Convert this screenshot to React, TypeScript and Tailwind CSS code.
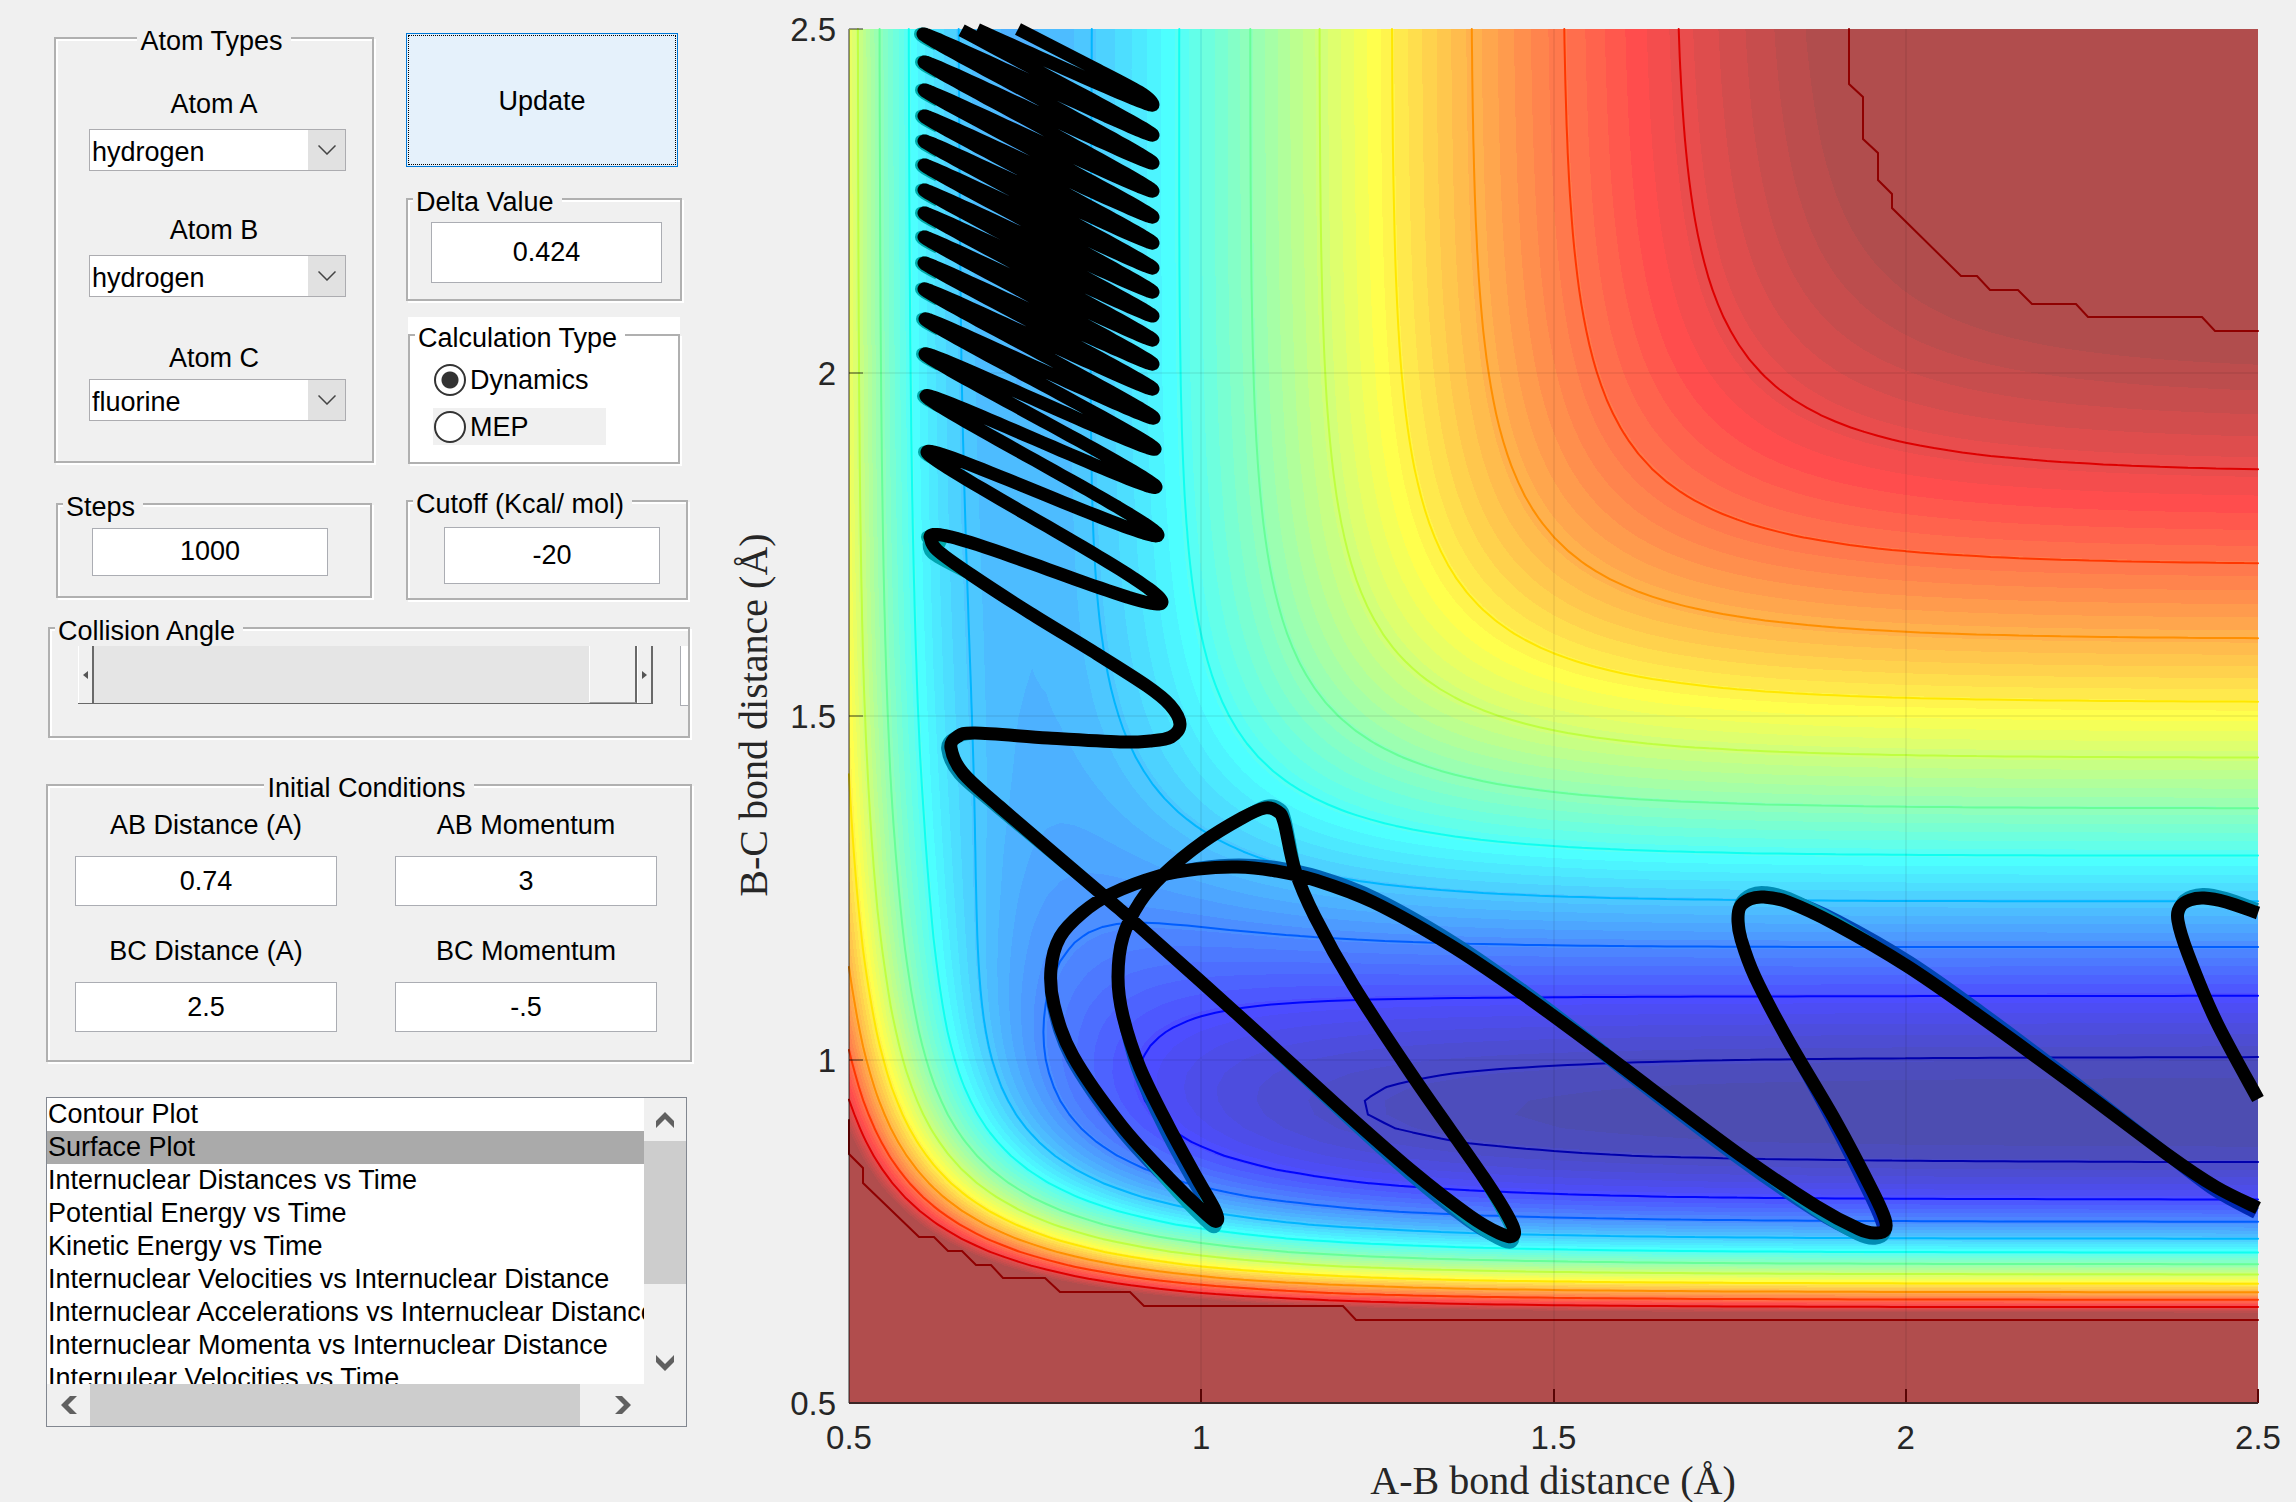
import { useId, useMemo, useState } from "react";
import type { ReactNode } from "react";

/* ---------- potential energy surface (collinear LEPS, H + H + F) ---------- */

type Pair = { d: number; beta: number; re: number; sato: number };
type Pt = [number, number];

const HH: Pair = { d: 109.5, beta: 1.959, re: 0.741, sato: 0.19 };
const HF: Pair = { d: 141.2, beta: 2.245, re: 0.92, sato: 0.167 };

function terms({ d, beta, re, sato }: Pair, r: number) {
  const e1 = Math.exp(-beta * (r - re));
  const e2 = e1 * e1;
  const c = d / (4 * (1 + sato));
  return {
    q: c * ((3 + sato) * e2 - (2 + 6 * sato) * e1),
    j: c * ((1 + 3 * sato) * e2 - (6 + 2 * sato) * e1),
  };
}

function potential(rab: number, rbc: number) {
  const a = terms(HH, rab);
  const b = terms(HF, rbc);
  const c = terms(HF, rab + rbc);
  const s = (a.j - b.j) ** 2 + (b.j - c.j) ** 2 + (c.j - a.j) ** 2;
  return a.q + b.q + c.q - Math.sqrt(s / 2);
}

const LEFT = 849;
const RIGHT = 2258;
const TOP = 29;
const BOTTOM = 1403;
const N = 100;
const V_MIN = -141.2;
const V_MAX = -20;
const COLOURS = 64;

const gx = (i: number) => LEFT + ((RIGHT - LEFT) * i) / N;
const gy = (j: number) => BOTTOM - ((BOTTOM - TOP) * j) / N;

const GRID: number[][] = Array.from({ length: N + 1 }, (_, j) =>
  Array.from({ length: N + 1 }, (_, i) => potential(0.5 + (2 * i) / N, 0.5 + (2 * j) / N)),
);

const unit = (v: number) => Math.min(1, Math.max(0, v));

function jet(t: number, alpha: number) {
  const mix = (v: number) => Math.round(255 * (unit(v) * alpha + (1 - alpha)));
  return `rgb(${mix(1.5 - Math.abs(4 * t - 3))},${mix(1.5 - Math.abs(4 * t - 2))},${mix(1.5 - Math.abs(4 * t - 1))})`;
}

const f = (n: number) => n.toFixed(1);

function corners(i: number, j: number) {
  return [
    { x: gx(i), y: gy(j), v: GRID[j][i] },
    { x: gx(i + 1), y: gy(j), v: GRID[j][i + 1] },
    { x: gx(i + 1), y: gy(j + 1), v: GRID[j + 1][i + 1] },
    { x: gx(i), y: gy(j + 1), v: GRID[j + 1][i] },
  ];
}

/* Area in which the potential is at least `level`. */
function regionPath(level: number) {
  let d = "";
  for (let j = 0; j < N; j++) {
    let run = -1;
    for (let i = 0; i <= N; i++) {
      const inside =
        i < N &&
        GRID[j][i] >= level &&
        GRID[j][i + 1] >= level &&
        GRID[j + 1][i + 1] >= level &&
        GRID[j + 1][i] >= level;
      if (inside) {
        if (run < 0) run = i;
        continue;
      }
      if (run >= 0) {
        d += `M${f(gx(run))} ${f(gy(j))}H${f(gx(i))}V${f(gy(j + 1))}H${f(gx(run))}Z`;
        run = -1;
      }
      if (i === N) continue;
      const c = corners(i, j);
      const pts: string[] = [];
      for (let k = 0; k < 4; k++) {
        const p = c[k];
        const q = c[(k + 1) % 4];
        if (p.v >= level) pts.push(`${f(p.x)} ${f(p.y)}`);
        if (p.v >= level !== q.v >= level) {
          const t = (level - p.v) / (q.v - p.v);
          pts.push(`${f(p.x + (q.x - p.x) * t)} ${f(p.y + (q.y - p.y) * t)}`);
        }
      }
      if (pts.length > 2) d += `M${pts.join("L")}Z`;
    }
  }
  return d;
}

function linePath(level: number) {
  let d = "";
  for (let j = 0; j < N; j++) {
    for (let i = 0; i < N; i++) {
      const c = corners(i, j);
      const pts: string[] = [];
      for (let k = 0; k < 4; k++) {
        const p = c[k];
        const q = c[(k + 1) % 4];
        if (p.v >= level !== q.v >= level) {
          const t = (level - p.v) / (q.v - p.v);
          pts.push(`${f(p.x + (q.x - p.x) * t)} ${f(p.y + (q.y - p.y) * t)}`);
        }
      }
      if (pts.length >= 2) d += `M${pts[0]}L${pts[1]}`;
    }
  }
  return d;
}

/* ---------- trajectory ---------- */

const RIGHT_TURNS: Pt[] = [
  [1153, 105], [1153, 135], [1153, 163], [1153, 191], [1153, 217], [1153, 243],
  [1153, 268], [1153, 292], [1153, 316], [1153, 340], [1153, 364], [1153, 389],
  [1154, 418], [1155, 449], [1156, 487], [1158, 535], [1162, 602],
];
const LEFT_TURNS: Pt[] = [
  [922, 7], [923, 34], [924, 62], [924, 90], [924, 116], [924, 141],
  [924, 165], [924, 190], [924, 213], [924, 237], [924, 263], [924, 289],
  [925, 319], [925, 354], [926, 396], [927, 452], [930, 537],
];
const SWING = 57;
const ANHARMONIC = 0.05;
const STEPS = 40;

function vibration(): Pt[] {
  const turns = RIGHT_TURNS.flatMap((r, k) => [
    { x: r[0], side: 1, drift: r[1] - SWING },
    { x: LEFT_TURNS[k][0], side: -1, drift: LEFT_TURNS[k][1] + SWING },
  ]);
  const out: Pt[] = [];
  for (let k = 0; k < turns.length - 1; k++) {
    const a = turns[k];
    const b = turns[k + 1];
    const before = turns[k - 1]?.drift ?? a.drift - 15;
    const after = turns[k + 2]?.drift ?? 667;
    const ma = (b.drift - before) / 2;
    const mb = (after - a.drift) / 2;
    for (let n = 0; n < STEPS; n++) {
      const s = n / STEPS;
      const c = (1 - Math.cos(Math.PI * s)) / 2 + b.side * ANHARMONIC * Math.sin(Math.PI * s) ** 2;
      const s2 = s * s;
      const s3 = s2 * s;
      const drift =
        (2 * s3 - 3 * s2 + 1) * a.drift +
        (s3 - 2 * s2 + s) * ma +
        (3 * s2 - 2 * s3) * b.drift +
        (s3 - s2) * mb;
      out.push([a.x + (b.x - a.x) * c, drift + SWING * (a.side + (b.side - a.side) * c)]);
    }
  }
  return out;
}

const REACTION: Pt[] = [
  [930, 537], [937, 550], [970, 574], [1030, 613], [1097, 654], [1147, 686], [1170, 705],
  [1180, 724], [1171, 737], [1150, 741], [1120, 742], [1048, 738], [975, 733], [957, 737],
  [951, 748], [963, 773], [1000, 807], [1104, 896], [1133, 921], [1237, 1014], [1339, 1107],
  [1412, 1171], [1470, 1216], [1499, 1233], [1513, 1236], [1511, 1222], [1484, 1178],
  [1412, 1075], [1353, 985], [1315, 917], [1295, 870], [1284, 822], [1277, 811], [1265, 808],
  [1242, 818], [1203, 842], [1164, 874], [1140, 902], [1123, 937], [1118, 977], [1123, 1016],
  [1140, 1068], [1169, 1127], [1198, 1180], [1215, 1210], [1217, 1221], [1207, 1215],
  [1169, 1178], [1121, 1125], [1073, 1056], [1054, 1005], [1051, 969], [1060, 937],
  [1082, 913], [1111, 894], [1159, 876], [1198, 869], [1237, 867], [1276, 871], [1315, 880],
  [1373, 902], [1450, 945], [1523, 994], [1590, 1043], [1621, 1066], [1740, 1155],
  [1816, 1206], [1859, 1229], [1876, 1233], [1885, 1230], [1885, 1219], [1873, 1192],
  [1835, 1120], [1788, 1040], [1755, 977], [1741, 939], [1738, 921], [1740, 907], [1750, 899],
  [1764, 897], [1788, 902], [1835, 924], [1907, 966], [1978, 1015], [2073, 1084],
  [2168, 1155], [2216, 1187], [2258, 1208],
];

const RETURN_LEG: Pt[] = [
  [2258, 1099], [2216, 1021], [2188, 954], [2178, 921], [2180, 907], [2190, 900],
  [2204, 898], [2226, 902], [2258, 913],
];

function spline(p: Pt[]) {
  let d = `M${f(p[0][0])} ${f(p[0][1])}`;
  for (let i = 0; i < p.length - 1; i++) {
    const a = p[i - 1] ?? p[i];
    const b = p[i];
    const c = p[i + 1];
    const e = p[i + 2] ?? c;
    d += `C${f(b[0] + (c[0] - a[0]) / 6)} ${f(b[1] + (c[1] - a[1]) / 6)} ${f(c[0] - (e[0] - b[0]) / 6)} ${f(c[1] - (e[1] - b[1]) / 6)} ${f(c[0])} ${f(c[1])}`;
  }
  return d;
}

function trajectoryPath() {
  let d = "M1018 29L1092 67C1125 84 1153 97 1153 105";
  let pen = true;
  for (const [x, y] of vibration()) {
    if (y < 29) {
      pen = false;
      continue;
    }
    d += `${pen ? "L" : "M"}${f(x)} ${f(y)}`;
    pen = true;
  }
  return d + "L" + spline(REACTION).slice(1);
}

/* Part of the curve that dips below the translucent surface, fading back into it at both ends. */
const submerged = (from: number, to: number, dx: number, dy: number) =>
  spline(
    REACTION.slice(from, to).map(([x, y], i, all): Pt => {
      const w = Math.sin((Math.PI * i) / (all.length - 1));
      return [x + dx * w, y + dy * w];
    }),
  );

const SHADES: { d: string; colour: string }[] = [
  { d: submerged(0, 3, -5, 3), colour: "#00a5b0" },
  { d: submerged(12, 18, -4, 1), colour: "#0087a8" },
  { d: submerged(19, 27, -3, 4), colour: "#0064b4" },
  { d: submerged(21, 27, -1, 6), colour: "#0096b4" },
  { d: submerged(30, 35, 2, -3), colour: "#0096b4" },
  { d: submerged(40, 46, -4, 3), colour: "#0050b4" },
  { d: submerged(45, 52, -2, 3), colour: "#0050b4" },
  { d: submerged(43, 49, -2, 6), colour: "#00a0b4" },
  { d: submerged(55, 65, 3, -4), colour: "#0064b4" },
  { d: submerged(63, 71, -1, 5), colour: "#0050b4" },
  { d: submerged(65, 71, -1, 6), colour: "#008cb4" },
  { d: submerged(68, 74, -4, 2), colour: "#0028b4" },
  { d: submerged(79, 86, 3, -4), colour: "#0046b4" },
  { d: submerged(75, 83, 1, -5), colour: "#008cb4" },
  { d: spline([[2168, 1155], [2214, 1190], [2256, 1213]]), colour: "#0028b4" },
  { d: spline([[2178, 915], [2184, 900], [2203, 894], [2226, 898], [2257, 909]]), colour: "#008cb4" },
];

const CUTOFF_LOW =
  "M849 1120V1154L863 1168V1183L919 1237H934L948 1251H962L976 1265H991L1003 1278H1045L1060 1292H1130L1144 1306H1343L1356 1320H2258";
const CUTOFF_HIGH =
  "M1849 29V84L1863 97V139L1878 153V180L1892 194V208L1961 276H1977L1990 290H2018L2032 304H2076L2088 317H2202L2215 331H2258";

const TICKS = [0.5, 1, 1.5, 2, 2.5];
const px = (v: number) => LEFT + ((v - 0.5) / 2) * (RIGHT - LEFT);
const py = (v: number) => BOTTOM - ((v - 0.5) / 2) * (BOTTOM - TOP);

function EnergyChart() {
  const bands = useMemo(
    () =>
      Array.from({ length: COLOURS - 1 }, (_, k) => ({
        d: regionPath(V_MIN + ((V_MAX - V_MIN) * (k + 1)) / COLOURS),
        colour: jet(Math.min(k + 2, COLOURS - 1) / COLOURS, 0.7),
      })),
    [],
  );
  const lines = useMemo(
    () =>
      Array.from({ length: 11 }, (_, k) => {
        const level = -137 + 10.45 * k;
        return { d: linePath(level), colour: jet((level - V_MIN) / (V_MAX - V_MIN) + 0.01, 1) };
      }),
    [],
  );
  const trajectory = useMemo(trajectoryPath, []);

  return (
    <svg
      viewBox="700 0 1596 1502"
      className="block h-auto w-full"
      role="img"
      aria-label="Potential energy surface with trajectory"
    >
      <g shapeRendering="crispEdges">
        <rect x={LEFT} y={TOP} width={RIGHT - LEFT} height={BOTTOM - TOP} fill={jet(1 / COLOURS, 0.7)} />
        {bands.map((b, k) => (
          <path key={k} d={b.d} fill={b.colour} />
        ))}
        <path d={CUTOFF_LOW + "V1403H849Z"} fill={jet(1 - 1 / COLOURS, 0.7)} />
        <path d={CUTOFF_HIGH + "V29Z"} fill={jet(1 - 1 / COLOURS, 0.7)} />
      </g>
      <g fill="none" strokeWidth="2" strokeLinecap="round">
        {lines.map((l, k) => (
          <path key={k} d={l.d} stroke={l.colour} />
        ))}
        <path d={CUTOFF_LOW} stroke="#8f0000" />
        <path d={CUTOFF_HIGH} stroke="#8f0000" />
      </g>
      <g shapeRendering="crispEdges" fill="none" strokeWidth="2">
        {TICKS.slice(1, 4).map((v) => (
          <path
            key={v}
            d={`M${px(v)} ${TOP}V${BOTTOM}M${LEFT} ${py(v)}H${RIGHT}`}
            stroke="#000"
            strokeOpacity="0.06"
          />
        ))}
        {TICKS.slice(1, 4).map((v) => (
          <path key={v} d={`M${LEFT} ${py(v)}h14`} stroke="#000" strokeOpacity="0.35" />
        ))}
        {TICKS.slice(1).map((v) => (
          <path key={v} d={`M${px(v)} ${BOTTOM}v-14`} stroke="#5a0505" />
        ))}
        <path d={`M${LEFT} ${TOP}h14M${LEFT} ${TOP}V${BOTTOM}`} stroke="#000" strokeOpacity="0.4" />
        <path d={`M${LEFT} ${BOTTOM}H${RIGHT}`} stroke="#3c2626" />
      </g>

      <g fill="none" strokeWidth="12" strokeLinejoin="round">
        {LEFT_TURNS.slice(1).map(([x, y]) => (
          <path
            key={y}
            d={`M${x + 14} ${y + 11}Q${x - 4} ${y + 2} ${x - 3} ${y}Q${x - 3} ${y - 1} ${x + 4} ${y}`}
            stroke="#00aaaa"
          />
        ))}
        {SHADES.map((s, k) => (
          <path key={k} d={s.d} stroke={s.colour} />
        ))}
        <g stroke="#000" strokeWidth="13">
          <path d={trajectory} />
          <path d={spline(RETURN_LEG)} />
        </g>
      </g>

      <g fill="#262626" fontFamily="'Liberation Sans', Arial, sans-serif" fontSize="33">
        {TICKS.map((v) => (
          <text key={v} x={px(v)} y="1449" textAnchor="middle">
            {v}
          </text>
        ))}
        {TICKS.map((v) => (
          <text key={v} x="836" y={py(v) + 12} textAnchor="end">
            {v}
          </text>
        ))}
      </g>
      <g fill="#262626" fontFamily="'Liberation Serif', 'Times New Roman', serif" fontSize="40" textAnchor="middle">
        <text x="1553" y="1494">
          A-B bond distance (Å)
        </text>
        <text transform="translate(767 715) rotate(-90)">B-C bond distance (Å)</text>
      </g>
    </svg>
  );
}

/* ---------- controls ---------- */

function Group({
  title,
  centered = false,
  white = false,
  className = "",
  children,
}: {
  title: string;
  centered?: boolean;
  white?: boolean;
  className?: string;
  children: ReactNode;
}) {
  return (
    <fieldset
      className={`min-w-0 border-2 border-[#b0b0b0] shadow-[inset_2px_2px_0_#fff,2px_2px_0_#fff] ${className}`}
    >
      <legend
        className={`pt-1.5 pr-2 pl-[3px] leading-[30px] whitespace-nowrap ${centered ? "mx-auto" : "ml-[5px]"} ${white ? "bg-white" : "bg-[#f0f0f0]"}`}
      >
        {title}
      </legend>
      {children}
    </fieldset>
  );
}

function Field({ value, label, id, className }: { value: string; label?: string; id?: string; className: string }) {
  return (
    <input
      id={id}
      aria-label={label}
      defaultValue={value}
      className={`block min-w-0 border border-[#abadb3] bg-white text-center outline-none ${className}`}
    />
  );
}

function AtomSelect({ label, value, className }: { label: string; value: string; className: string }) {
  const id = useId();
  return (
    <div className={`flex flex-col ${className}`}>
      <label htmlFor={id} className="text-center leading-[30px]">
        {label}
      </label>
      <div className="relative mr-[26px] ml-[33px]">
        <select
          id={id}
          defaultValue={value}
          className="block h-[42px] w-full appearance-none border border-[#acacb0] bg-white pt-0.5 pl-0.5 outline-none"
        >
          <option>hydrogen</option>
          <option>fluorine</option>
        </select>
        <span className="pointer-events-none absolute inset-y-px right-px flex w-[37px] items-center justify-center bg-[#e1e1e1]">
          <svg width="18" height="10" viewBox="0 0 18 10" fill="none" stroke="#444" strokeWidth="1.5">
            <path d="M0.5 0.5L9 9L17.5 0.5" />
          </svg>
        </span>
      </div>
    </div>
  );
}

function Radio({ label, checked, onChange, className }: { label: string; checked: boolean; onChange: () => void; className: string }) {
  return (
    <label className={`flex h-[37px] items-center gap-1 pl-px ${className}`}>
      <input
        type="radio"
        name="calculation"
        checked={checked}
        onChange={onChange}
        className="size-8 appearance-none rounded-full border-2 border-[#333] bg-white checked:bg-[radial-gradient(circle,#333_8px,#fff_9px)]"
      />
      <span className="leading-[30px]">{label}</span>
    </label>
  );
}

function Condition({ label, value }: { label: string; value: string }) {
  const id = useId();
  return (
    <div className="flex flex-col gap-4">
      <label htmlFor={id} className="text-center leading-[30px]">
        {label}
      </label>
      <Field id={id} value={value} className="h-[50px] w-full" />
    </div>
  );
}

function Chevron({ className = "" }: { className?: string }) {
  return (
    <svg width="18" height="16" viewBox="0 0 18 16" className={className} fill="#606060">
      <path d="M9 0L18 9V16L9 7L0 16V9Z" />
    </svg>
  );
}

const PLOTS = [
  "Contour Plot",
  "Surface Plot",
  "Internuclear Distances vs Time",
  "Potential Energy vs Time",
  "Kinetic Energy vs Time",
  "Internuclear Velocities vs Internuclear Distance",
  "Internuclear Accelerations vs Internuclear Distance",
  "Internuclear Momenta vs Internuclear Distance",
  "Internulear Velocities vs Time",
];

function PlotList() {
  const [selected, setSelected] = useState("Surface Plot");
  return (
    <div className="mt-[35px] mr-[5px] grid grid-cols-[minmax(0,1fr)_42px] grid-rows-[286px_42px] border border-[#828790] bg-[#f0f0f0]">
      <ul role="listbox" aria-label="Plot type" className="overflow-hidden bg-white">
        {PLOTS.map((p) => (
          <li key={p} role="option" aria-selected={p === selected}>
            <button
              type="button"
              onClick={() => setSelected(p)}
              className={`block h-[33px] w-full overflow-hidden pl-px text-left leading-[33px] whitespace-nowrap ${p === selected ? "bg-[#aaaaaa]" : ""}`}
            >
              {p}
            </button>
          </li>
        ))}
      </ul>
      <div className="flex flex-col items-center">
        <button type="button" aria-label="Scroll up" className="flex h-[43px] w-full items-center justify-center">
          <Chevron />
        </button>
        <div className="h-[143px] w-full bg-[#cdcdcd]" />
        <button type="button" aria-label="Scroll down" className="mt-auto flex h-[43px] w-full items-center justify-center">
          <Chevron className="rotate-180" />
        </button>
      </div>
      <div className="flex items-center">
        <button type="button" aria-label="Scroll left" className="flex h-full w-[43px] items-center justify-center">
          <Chevron className="-rotate-90" />
        </button>
        <div className="h-full flex-1 bg-[#cdcdcd]" />
        <div className="w-[21px]" />
        <button type="button" aria-label="Scroll right" className="flex h-full w-[43px] items-center justify-center">
          <Chevron className="rotate-90" />
        </button>
      </div>
      <div />
    </div>
  );
}

export default function App() {
  const [mode, setMode] = useState("Dynamics");
  return (
    <main className="grid min-h-screen grid-cols-[700fr_1596fr] items-start overflow-hidden bg-[#f0f0f0] font-['Liberation_Sans',Arial,sans-serif] text-[27px] text-black">
      <form className="flex min-w-0 flex-col pt-5 pr-2 pl-[46px]" onSubmit={(e) => e.preventDefault()}>
        <div className="grid grid-cols-[320fr_278fr] items-start gap-8 px-2">
          <Group title="Atom Types" centered className="pb-10">
            <AtomSelect label="Atom A" value="hydrogen" className="gap-2.5 pt-[33px]" />
            <AtomSelect label="Atom B" value="hydrogen" className="gap-2.5 pt-11" />
            <AtomSelect label="Atom C" value="fluorine" className="gap-1.5 pt-[46px]" />
          </Group>

          <div className="flex min-w-0 flex-col">
            <button
              type="submit"
              className="mt-[13px] mr-1.5 h-[134px] border border-[#0078d7] bg-[#e5f1fb] p-px"
            >
              <span className="flex h-full items-center justify-center border border-dotted border-black pt-0.5">Update</span>
            </button>
            <Group title="Delta Value" className="mt-3.5 mr-0.5 pb-4">
              <Field label="Delta Value" value="0.424" className="mt-[5px] ml-[23px] h-[61px] w-[calc(100%-41px)]" />
            </Group>
            <div className="mt-4 mr-1 ml-0.5 bg-white">
              <Group title="Calculation Type" white className="pb-[17px]">
                <div className="ml-[23px] flex flex-col gap-2.5 pt-2">
                  <Radio label="Dynamics" checked={mode === "Dynamics"} onChange={() => setMode("Dynamics")} className="bg-white" />
                  <Radio label="MEP" checked={mode === "MEP"} onChange={() => setMode("MEP")} className="mr-[72px] bg-[#f0f0f0]" />
                </div>
              </Group>
            </div>
          </div>
        </div>

        <div className="mt-[19px] grid grid-cols-[316fr_282fr] items-center gap-[34px] pr-1 pl-2.5">
          <Group title="Steps" className="pb-5">
            <Field label="Steps" value="1000" className="mt-1.5 ml-[34px] h-12 w-[calc(100%-76px)]" />
          </Group>
          <Group title="Cutoff (Kcal/ mol)" className="pb-3.5">
            <Field label="Cutoff" value="-20" className="mt-2 ml-9 h-[57px] w-[calc(100%-62px)]" />
          </Group>
        </div>

        <Group title="Collision Angle" className="mx-0.5 mt-2.5 pb-[30px]">
          <div className="flex pl-7">
            <div className="flex h-[58px] flex-1 border-r-2 border-b border-[#696969]">
              <button
                type="button"
                aria-label="Decrease angle"
                className="flex w-4 items-center justify-center border-r-2 border-l border-r-[#696969] border-l-white"
              >
                <svg width="5" height="8" viewBox="0 0 5 8" fill="#555">
                  <path d="M5 0V8L0 4Z" />
                </svg>
              </button>
              <input
                type="range"
                aria-label="Collision Angle"
                min="0"
                max="180"
                defaultValue="180"
                className="h-full min-w-0 flex-1 appearance-none bg-[#e5e5e5] outline-none [&::-webkit-slider-thumb]:h-[57px] [&::-webkit-slider-thumb]:w-12 [&::-webkit-slider-thumb]:appearance-none [&::-webkit-slider-thumb]:border-r-2 [&::-webkit-slider-thumb]:border-b [&::-webkit-slider-thumb]:border-l [&::-webkit-slider-thumb]:border-r-[#696969] [&::-webkit-slider-thumb]:border-b-[#a0a0a0] [&::-webkit-slider-thumb]:border-l-white [&::-webkit-slider-thumb]:bg-[#f0f0f0]"
              />
              <button
                type="button"
                aria-label="Increase angle"
                className="flex w-3.5 items-center justify-center border-l border-white"
              >
                <svg width="5" height="8" viewBox="0 0 5 8" fill="#555">
                  <path d="M0 0V8L5 4Z" />
                </svg>
              </button>
            </div>
            <div className="ml-[27px] h-[60px] w-2 border-b border-l border-[#abadb3] bg-white" />
          </div>
        </Group>

        <Group title="Initial Conditions" centered className="mt-[29px] pb-7">
          <div className="grid grid-cols-2 gap-x-[58px] gap-y-[30px] pt-[7px] pr-[33px] pl-[27px]">
            <Condition label="AB Distance (A)" value="0.74" />
            <Condition label="AB Momentum" value="3" />
            <Condition label="BC Distance (A)" value="2.5" />
            <Condition label="BC Momentum" value="-.5" />
          </div>
        </Group>

        <PlotList />
      </form>

      <EnergyChart />
    </main>
  );
}
